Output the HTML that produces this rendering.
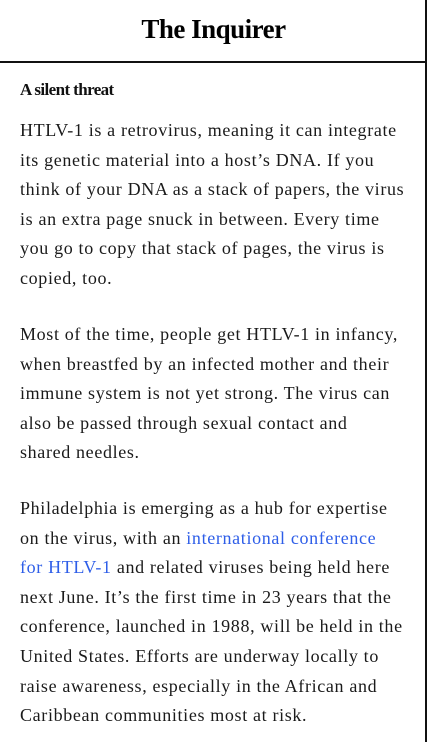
<!DOCTYPE html>
<html><head><meta charset="utf-8"><style>
html,body{margin:0;padding:0;background:#fff;}
body{width:427px;height:742px;overflow:hidden;position:relative;font-family:"Liberation Serif",serif;color:#1a1a1a;}
.rb{position:absolute;right:0;top:0;width:2px;height:742px;background:#111;}
.hdr{height:61px;border-bottom:2px solid #111;text-align:center;}
.logo{font-family:"Liberation Serif",serif;font-weight:bold;font-size:27px;line-height:58px;letter-spacing:-0.5px;color:#000;}
h2{margin:0;position:absolute;left:20px;top:80px;font-size:17px;font-weight:bold;letter-spacing:-0.6px;color:#111;}
.p{position:absolute;left:20px;font-size:18px;letter-spacing:0.65px;line-height:29.6px;white-space:nowrap;}
a{color:#2e5ee8;text-decoration:none;}
</style></head><body>
<div class="rb"></div>
<div class="hdr"><span class="logo">The Inquirer</span></div>
<h2>A silent threat</h2>
<div class="p" style="top:116px">HTLV-1 is a retrovirus, meaning it can integrate<br>its genetic material into a host’s DNA. If you<br>think of your DNA as a stack of papers, the virus<br>is an extra page snuck in between. Every time<br>you go to copy that stack of pages, the virus is<br>copied, too.</div>
<div class="p" style="top:320px">Most of the time, people get HTLV-1 in infancy,<br>when breastfed by an infected mother and their<br>immune system is not yet strong. The virus can<br>also be passed through sexual contact and<br>shared needles.</div>
<div class="p" style="top:494px">Philadelphia is emerging as a hub for expertise<br>on the virus, with an <a>international conference</a><br><a>for HTLV-1</a> and related viruses being held here<br>next June. It’s the first time in 23 years that the<br>conference, launched in 1988, will be held in the<br>United States. Efforts are underway locally to<br>raise awareness, especially in the African and<br>Caribbean communities most at risk.</div>
</body></html>
